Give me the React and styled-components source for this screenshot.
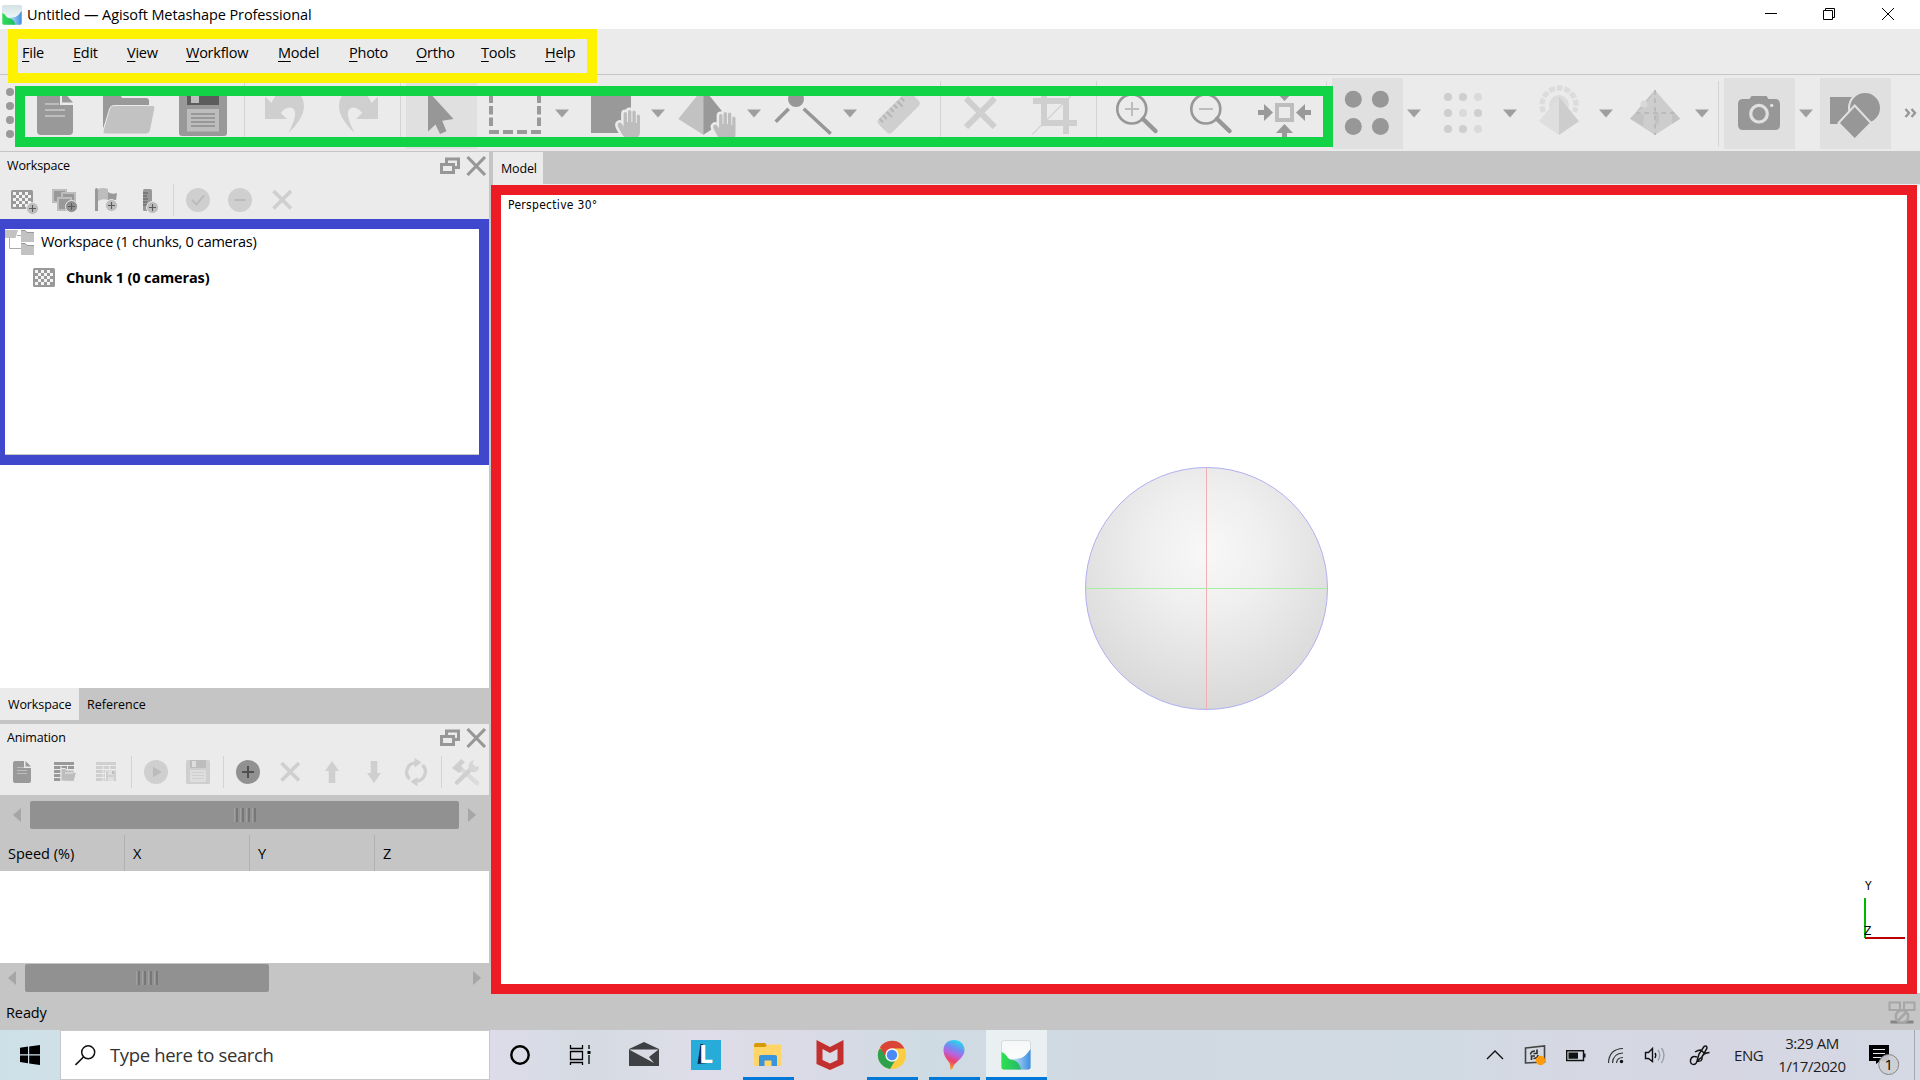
import React from "react";
import styled, { createGlobalStyle } from "styled-components";

const GlobalStyle = createGlobalStyle`
  * { box-sizing: border-box; }
  html, body { margin: 0; padding: 0; overflow: hidden; }
  body { font-family: "Open Sans", "Noto Sans", sans-serif; color: #000; }
  svg { display: block; flex: none; }
`;

const c = {
  panel: "#ebebeb",
  grey: "#c5c5c5",
  dark: "#999999",
  mid: "#bdbdbd",
  off: "#cfcfcf",
  ink: "#5c5c5c",
  pressed: "#e0e0e0",
};

const Desktop = styled.div`
  position: relative;
  width: 1920px;
  height: 1080px;
  display: flex;
  flex-direction: column;
  overflow: hidden;
  background: ${c.grey};
`;

const Label = styled.span`
  font-size: ${(p) => p.$size || 15}px;
  font-weight: ${(p) => (p.$bold ? 700 : 400)};
  letter-spacing: ${(p) => p.$track || 0}px;
  line-height: 20px;
  white-space: pre;
`;

/* ---------- title + menu ---------- */
const TitleBar = styled.header`
  display: flex;
  align-items: center;
  height: 29px;
  padding-left: 2px;
  background: #fff;
`;
const TitleText = styled(Label)`
  margin-left: 5px;
  flex: 1;
`;
const WindowButtons = styled.div`
  display: flex;
`;
const MenuBar = styled.nav`
  display: flex;
  gap: 28px;
  align-items: center;
  height: 46px;
  padding: 2px 0 0 22px;
  background: ${c.panel};
  border-bottom: 1px solid ${c.grey};
`;
const MenuItem = styled(Label)`
  display: block;
  width: ${(p) => p.$w}px;
  &::first-letter {
    text-decoration: underline;
    text-underline-offset: 3px;
  }
`;

/* ---------- main toolbar ---------- */
const ToolBar = styled.div`
  display: flex;
  align-items: flex-start;
  height: 77px;
  padding-top: 3px;
  background: ${c.panel};
  border-bottom: 1px solid ${c.grey};
`;
const ToolGroup = styled.div`
  display: flex;
  gap: 3px;
`;
const ToolButton = styled.div`
  display: flex;
  width: 71px;
  height: 71px;
  background: ${(p) => (p.$pressed ? c.pressed : "transparent")};
`;
const Tool = styled.div`
  display: flex;
  align-items: center;
`;
const Divider = styled.div`
  width: 11px;
  height: 71px;
  display: flex;
  padding: 3px 5px;
  &::before {
    content: "";
    width: 1px;
    background: #d4d4d4;
  }
`;

/* ---------- docks ---------- */
const Main = styled.div`
  display: flex;
  height: 842px;
`;
const Side = styled.aside`
  width: 489px;
  display: flex;
  flex-direction: column;
`;
const Splitter = styled.div`
  width: 4px;
  background: ${c.grey};
`;
const Dock = styled.section`
  height: ${(p) => p.$h}px;
  background: ${c.panel};
`;
const DockHeader = styled.div`
  display: flex;
  height: 32px;
  padding: 3px 2px 0 7px;
  & > span {
    flex: 1;
    padding-top: 1px;
  }
`;
const DockTools = styled.div`
  display: flex;
  height: 32px;
  padding-left: 1px;
`;
const DockDivider = styled.div`
  width: 8px;
  padding-left: 4px;
  display: flex;
  &::before {
    content: "";
    width: 1px;
    background: #d4d4d4;
  }
`;
const Tree = styled.div`
  height: 469px;
  padding-top: 10px;
  background: #fff;
`;
const TreeRow = styled.div`
  display: flex;
  align-items: center;
  height: ${(p) => p.$h}px;
  padding-left: ${(p) => p.$indent}px;
  gap: ${(p) => p.$gap}px;
  & > span { padding-top: ${(p) => p.$drop || 0}px; }
`;
const TabStrip = styled.div`
  display: flex;
  height: ${(p) => p.$h}px;
  background: ${c.grey};
`;
const Tab = styled.div`
  display: flex;
  align-items: center;
  height: 32px;
  padding: 2px 0 0 8px;
  width: ${(p) => p.$w}px;
  background: ${(p) => (p.$active ? c.panel : "transparent")};
`;
const ScrollBar = styled.div`
  display: flex;
  align-items: center;
  height: ${(p) => p.$h}px;
  padding: ${(p) => p.$pad};
  background: ${c.grey};
`;
const Thumb = styled.div`
  width: ${(p) => p.$w}px;
  height: 28px;
  margin: 0 auto 0 9px;
  display: flex;
  align-items: center;
  justify-content: center;
  border-radius: 2px;
  background: #919191;
`;
const TableHead = styled.div`
  display: flex;
  height: 36px;
  overflow: hidden;
  background: ${c.grey};
`;
const HeadCell = styled.div`
  flex: none;
  width: 125px;
  display: flex;
  align-items: center;
  padding: 2px 0 0 8px;
  border-right: 1px solid #b0b0b0;
`;
const TableBody = styled.div`
  height: 92px;
  background: #fff;
`;

/* ---------- viewport ---------- */
const Work = styled.main`
  flex: 1;
  display: flex;
  flex-direction: column;
`;
const Viewport = styled.div`
  position: relative;
  flex: 1;
  border-top: 1px solid ${c.panel};
  margin-bottom: 1px;
  background: #fff;
`;
const Placed = styled.div`
  position: absolute;
  left: ${(p) => p.$x}px;
  top: ${(p) => p.$y}px;
`;
const CanvasText = styled(Label)`
  font-family: "DejaVu Sans Condensed", "DejaVu Sans", sans-serif;
  font-stretch: condensed;
  line-height: 14px;
  display: block;
`;

/* ---------- status + taskbar ---------- */
const StatusBar = styled.footer`
  display: flex;
  align-items: center;
  justify-content: space-between;
  height: 36px;
  padding: 2px 4px 0 6px;
  background: ${c.grey};
`;
const TaskBar = styled.div`
  display: flex;
  height: 50px;
  background: linear-gradient(90deg, #cde0e7 0, #d0e0e8 60px, #dddcea 490px, #d5dbe2 590px, #dedde9 700px, #d9dae5 820px, #cfdbe2 920px, #d0d9e2 1100px, #d0dae2 1440px, #d5d8e3 1560px, #d6d6e3 1720px, #d4d9e4 1920px);
`;
const StartButton = styled.div`
  width: 60px;
  display: flex;
  align-items: center;
  justify-content: center;
`;
const SearchBox = styled.div`
  width: 430px;
  height: 50px;
  display: flex;
  align-items: center;
  padding-left: 14px;
  gap: 14px;
  background: #fff;
  border: 1px solid #c8c8c8;
  color: #333;
`;
const TaskButton = styled.div`
  position: relative;
  width: ${(p) => p.$w || 62}px;
  margin-left: ${(p) => p.$ml || 0}px;
  display: flex;
  flex-direction: column;
  align-items: center;
  justify-content: space-between;
  background: ${(p) => (p.$active ? "#eaeff2" : "transparent")};
`;
const Running = styled.div`
  width: ${(p) => (p.$active ? "100%" : "51px")};
  height: 3px;
  background: ${(p) => (p.$on ? "#0078d7" : "transparent")};
`;
const TileWrap = styled.div`
  position: relative;
`;
const TileLetter = styled.span`
  position: absolute;
  left: 8px;
  top: 10px;
  font: 700 25px/26px "Open Sans", sans-serif;
  color: #fff;
`;
const LogoWrap = styled.div`
  padding: 10px 1px 0 0;
`;
const Tray = styled.div`
  margin-left: auto;
  display: flex;
  align-items: center;
`;
const TrayText = styled(Label)`
  color: #1c1c1c;
`;
const Language = styled.div`
  width: 41px;
  padding-left: 14px;
`;
const Clock = styled.div`
  width: 92px;
  margin: 0 4px 2px 5px;
  display: flex;
  flex-direction: column;
  align-items: center;
  gap: 3px;
`;
const ShowDesktop = styled.div`
  width: 6px;
  height: 50px;
  margin-left: 8px;
  border-left: 1px solid #a3a8b3;
`;

const Highlight = styled.div`
  position: absolute;
  pointer-events: none;
  left: ${(p) => p.$x}px;
  top: ${(p) => p.$y}px;
  width: ${(p) => p.$w}px;
  height: ${(p) => p.$h}px;
  border: 10px solid ${(p) => p.$color};
  ${(p) => p.$edge && `border-left-width: 5px; box-shadow: inset 0 -1px 0 #c5c5c5;`}
`;

/* ---------- toolbar drawings ---------- */
const Icon = ({ children, w = 71, h = 71 }) => (
  <svg width={w} height={h} viewBox={`0 0 ${w} ${h}`} fill="none">{children}</svg>
);

const Hand = ({ dy = 0, dx = 0 }) => {
  const d = "M42 45.5Q43.6 43.6 45.6 45.6L47.6 48.5V35.8Q47.6 34 49.3 34T51 35.8V44H52V33.8Q52 32 53.7 32T55.4 33.8V44H56.4V34.4Q56.4 32.6 58.1 32.6T59.8 34.4V45H60.8V38.4Q60.8 36.6 62.4 36.6T64 38.4V54Q64 60 58 60H52.5Q48 60 46 56L42.4 49.5Q41 47 42 45.5Z";
  return (
    <g transform={`translate(${dx} ${dy})`}>
      <path d={d} stroke={c.panel} strokeWidth="5" strokeLinejoin="round" fill={c.panel} />
      <path d={d} fill={c.mid} />
    </g>
  );
};

const Arrow = () => (
  <svg width="22" height="14" viewBox="0 0 22 14"><path d="M4 2.5H18L11 10.5Z" fill="#9f9f9f" /></svg>
);

const bentArrow = "M15 18.5V41H37L30.8 35C34 30.5 39 28 43 30.5C48 34 43.5 45 38.5 54.8C46 48 54 38 54 28C54 18 47 11 38 11C31 11 25.500 16 21.500 25Z";

const NewIcon = () => (
  <Icon><path d="M21 12H40V27H53V53Q53 57 49 57H21Q17 57 17 53V16Q17 12 21 12Z" fill={c.dark} />
    <path d="M42 12V24.500H53Z" fill={c.dark} />
    <path d="M25 26H39M25 32H45M25 38H45" stroke={c.mid} strokeWidth="2" /></Icon>
);
const OpenIcon = () => (
  <Icon><path d="M9 51V15Q9 12 12 12H24L28 20H52Q55 20 55 23V28H20Q17 28 16 31Z" fill={c.dark} />
    <path d="M20 27.500H58Q61.500 27.500 60.700 31L56.500 52Q55.700 56 52 56H12Q8.300 56 9.200 52.500L15.500 31Q16.500 27.500 20 27.500Z" fill="#c2c2c2" stroke={c.panel} strokeWidth="1" /></Icon>
);
const SaveIcon = () => (
  <Icon><rect x="11" y="10" width="48" height="48" rx="3" fill={c.dark} /><path d="M19 10H51V27H19Z" fill={c.ink} />
    <path d="M23 12H31V25H23ZM19 31H51V53.500H19Z" fill={c.mid} />
    <path d="M23 36H47M23 40H47M23 44H47M23 48H47" stroke={c.dark} strokeWidth="1.8" /></Icon>
);
const UndoIcon = () => <Icon><path d={bentArrow} fill={c.off} /></Icon>;
const RedoIcon = () => <Icon><path transform="translate(69 0) scale(-1 1)" d={bentArrow} fill={c.off} /></Icon>;
const PointerIcon = () => <Icon><path d="M22 13V53.500L29.500 46.500L34 56L40.500 53.200L36.200 42.700L47.500 41Z" fill="#979797" /></Icon>;
const SelectIcon = () => (
  <Icon><g fill={c.dark}>{[9, 57].map((x) => <path key={x} d={`M${x} 16h4v9h-4zM${x} 28h4v8.500h-4zM${x} 39.500h4v8.500h-4z`} />)}
    {[9, 23, 37, 51].map((x) => <path key={x} d={`M${x} 52h10v4h-10zM${x} 12h10v4h-10z`} />)}</g></Icon>
);
const MoveRegionIcon = () => <Icon><path d="M15 15H55V55H15Z" fill={c.dark} /><Hand /></Icon>;
const MoveObjectIcon = () => (
  <Icon><path d="M31.300 10L6.300 41L31.300 56.700Z" fill="#c2c2c2" /><path d="M31.300 10L56.300 41L31.300 56.700Z" fill={c.dark} /><Hand dy={2} dx={-0.500} /></Icon>
);
const PointIcon = () => (
  <Icon><circle cx="28" cy="21" r="8" fill="#979797" /><path d="M20.700 30.700L7.700 43.700M35.700 30.700L62.700 55.700" stroke="#979797" strokeWidth="3.600" /></Icon>
);
const RulerIcon = () => (
  <Icon><g transform="translate(34.700 34.500) rotate(-45)"><rect x="-22.500" y="-9.500" width="45" height="19" rx="4" fill={c.off} />
    <path d="M-18 -9V-4M-13 -9V-4M-8 -9V-1.500M-3 -9V-4M2 -9V-4M7 -9V-1.500M12 -9V-4" stroke="#b5b5b5" strokeWidth="2" /></g></Icon>
);
const DeleteIcon = () => <Icon><path d="M20 20.300L48.700 49M48.700 20.300L20 49" stroke={c.off} strokeWidth="6" /></Icon>;
const CropIcon = () => (
  <Icon><path d="M13 23H46V56M24 14V45H57" stroke={c.off} strokeWidth="6" /><path d="M12.300 56.300L51 17.700" stroke={c.off} strokeWidth="1.200" /></Icon>
);
const ZoomIcon = ({ plus }) => (
  <Icon><circle cx="29.800" cy="31" r="14.500" stroke="#979797" strokeWidth="2.600" /><path d={plus ? "M23 31H37M30 24V38" : "M23 31H37"} stroke={c.mid} strokeWidth="2" />
    <path d="M41 41L53.500 53" stroke="#979797" strokeWidth="4.500" strokeLinecap="round" /></Icon>
);
const ZoomInIcon = () => <ZoomIcon plus />;
const FitIcon = () => (
  <Icon><rect x="27" y="27" width="15" height="15" stroke={c.mid} strokeWidth="4" />
    {[0, 90, 180, 270].map((r) => <path key={r} transform={`rotate(${r} 34.500 34.500)`} d="M8 32H14V26L23 34.500L14 43V37H8Z" fill={c.dark} />)}</Icon>
);
const FourDots = () => <Icon>{[21.300, 48.400].map((x) => [21.300, 48.500].map((y) => <circle key={`${x}-${y}`} cx={x} cy={y} r="8.500" fill="#979797" />))}</Icon>;
const NineDots = () => (
  <Icon>{[[0, 0, 1], [0, 1, 0], [0, 0, 1]].map((row, j) => row.map((l, i) => <circle key={`${i}${j}`} cx={20 + i * 15} cy={19 + j * 16} r="4" fill={l ? "#dadada" : "#cecece"} />))}</Icon>
);
const CloudIcon = () => (
  <Icon><path d="M19.500 34A17 17 0 1 1 50.500 34" stroke="#dcdcdc" strokeWidth="5.200" strokeDasharray="6 1.800" />
    <circle cx="35" cy="27" r="10" fill="#dcdcdc" /><path d="M35 19L15 43.300L35 57Z" fill="#dedede" /><path d="M35 19L55 43.300L35 57Z" fill="#cdcdcd" /></Icon>
);
const TexturedIcon = () => (
  <Icon><path d="M35 12.300L10 40.700L35 57L60 40.700Z" fill="#cdcdcd" /><path d="M35 12L16 34Q25 30 27 25ZM10 40.700L17 34L24 37L23 48ZM52 32L60 40.700L52 46ZM35 35H39V45L35 48Z" fill="#c3c3c3" />
    <circle cx="24" cy="26" r="3.500" fill="#d8d8d8" /><path d="M35 12V57M16 35H54" stroke="#bababa" strokeWidth="2" strokeDasharray="4.500 4" /></Icon>
);
const CameraIcon = () => (
  <Icon><path d="M19 21H25.500L27.500 18H42.500L44.500 21H51Q56 21 56 26V47Q56 52 51 52H19Q14 52 14 47V26Q14 21 19 21Z" fill="#979797" />
    <circle cx="35" cy="35.700" r="8.300" stroke={c.pressed} strokeWidth="3.200" /><circle cx="47.700" cy="27.400" r="1.700" fill={c.pressed} /></Icon>
);
const ShapesIcon = () => (
  <Icon><path d="M10 19H34V46H10Z" fill="#979797" /><circle cx="45" cy="30" r="16" fill="#979797" stroke={c.pressed} strokeWidth="2" />
    <path d="M34.700 27.500L51 45L34.700 61.500L18.500 45Z" fill="#979797" stroke={c.pressed} strokeWidth="2" /></Icon>
);

const GROUPS = [
  [[NewIcon], [OpenIcon], [SaveIcon]],
  [[UndoIcon], [RedoIcon]],
  [[PointerIcon, "on"], [SelectIcon, "", "menu"], [MoveRegionIcon, "", "menu"], [MoveObjectIcon, "", "menu"], [PointIcon, "", "menu"], [RulerIcon]],
  [[DeleteIcon], [CropIcon]],
  [[ZoomInIcon], [ZoomIcon], [FitIcon]],
  [[FourDots, "on", "menu"], [NineDots, "", "menu"], [CloudIcon, "", "menu"], [TexturedIcon, "", "menu"]],
  [[CameraIcon, "on", "menu"], [ShapesIcon, "on"]],
];

/* ---------- dock drawings ---------- */
const S = ({ children }) => <Icon w={42} h={32}>{children}</Icon>;
const Plus = ({ x, y, fill = c.mid }) => (
  <g><circle cx={x} cy={y} r="6" fill={fill} stroke={c.panel} strokeWidth="1" /><path d={`M${x - 3.500} ${y}h7M${x} ${y - 3.500}v7`} stroke={c.ink} strokeWidth="1.100" /></g>
);
const Checker = ({ x, y }) => {
  const cells = [];
  for (let j = 0; j < 5; j++) for (let i = 0; i < 6; i++) if ((i + j) % 2 === 0) cells.push(`M${x + 2 + i * 3} ${y + 2 + j * 3}h3v3h-3z`);
  return <g><rect x={x} y={y} width="22" height="19" rx="1.500" fill={c.dark} /><path d={cells.join("")} fill="#f4f4f4" /></g>;
};
const ChunkAdd = () => <S><Checker x={10} y={6} /><Plus x={31.500} y={24.500} /></S>;
const PhotosAdd = () => (
  <S>{[[10, 6], [19, 9], [15, 14]].map(([x, y]) => <rect key={x} x={x} y={y} width="13" height="12" fill={c.dark} stroke={c.mid} strokeWidth="2" />)}<Plus x={28.500} y={22.500} fill="#8f8f8f" /></S>
);
const FlagAdd = () => (
  <S><path d="M10 6Q10 4 11.500 4T13 6V27H10Z" fill={c.dark} /><path d="M23 8Q27 11 32 9L31 16H23Z" fill={c.dark} /><path d="M13 5Q18 3 23 5V16Q18 14 13 17Z" fill={c.mid} /><Plus x={26.500} y={21.500} /></S>
);
const ScaleAdd = () => (
  <S><rect x="16" y="5" width="9" height="22" rx="1.500" fill={c.dark} /><path d="M16 9h5M16 12h4M16 15h5M16 18h4M16 21h5" stroke={c.ink} strokeWidth="1" /><Plus x={25.500} y={23.500} /></S>
);
const Disc = ({ d, fill = c.off, stroke = "#bcbcbc", solid }) => (
  <S><circle cx="21" cy="16" r="12" fill={fill} /><path d={d} stroke={solid ? "none" : stroke} fill={solid ? stroke : "none"} strokeWidth="2" /></S>
);
const SmallX = () => <S><path d="M12.500 7L30 24.500M30 7L12.500 24.500" stroke={c.off} strokeWidth="3.700" /></S>;
const DocSmall = () => (
  <S><path d="M14 5H23V12H30V25Q30 27 28 27H14Q12 27 12 25V7Q12 5 14 5Z" fill={c.dark} /><path d="M24.500 5V10.500H30Z" fill={c.dark} /><path d="M16 11.500h7M16 14.500h10M16 17.500h10" stroke={c.mid} strokeWidth="1" /></S>
);
const Grid = ({ color }) => <g><path d="M11 6H31V25H11Z" fill={color} /><path d="M11 9.500H31M11 13.500H31M11 17.500H31M11 21.500H31M18 9.500V25M24.500 9.500V25" stroke={c.panel} strokeWidth="1" /></g>;
const GridOpen = () => <S><Grid color={c.dark} /><path d="M18 25V12.500H22L24 14H31V16.500H33.500L31 25.500Z" fill={c.mid} stroke={c.panel} /><path d="M22 17H30" stroke={c.panel} /></S>;
const GridSave = () => <S><Grid color={c.off} /><rect x="20.500" y="14" width="11" height="11.500" rx="1" fill={c.off} stroke={c.panel} /><path d="M23 15h6v4h-6zM23 21h6v4h-6z" fill="#dfdfdf" /><path d="M27 15h2v3h-2z" fill={c.mid} /></S>;
const SaveSmall = () => (
  <S><rect x="9" y="4" width="24" height="24" rx="1.500" fill={c.off} /><path d="M13 4H29V12H13Z" fill={c.mid} /><path d="M15 5H19V11H15ZM13 14H29V26H13Z" fill="#dedede" /><path d="M15 16.500H27M15 19.500H27M15 22.500H27" stroke={c.off} /></S>
);
const Up = ({ flip }) => <S><path transform={flip ? "rotate(180 21 16)" : undefined} d="M21 5L28 15H24.300V27H17.700V15H14Z" fill={c.off} /></S>;
const Refresh = () => (
  <S><path d="M20 6.800A9.500 9.500 0 0 0 14.500 23M22 25.200A9.500 9.500 0 0 0 27.500 9" stroke={c.off} strokeWidth="3.300" /><path d="M19.500 2V11.500L26.500 6.500ZM22.500 30.500V21L15.500 25.500Z" fill={c.off} /></S>
);
const ToolsIcon = () => (
  <S><path d="M15 12L32 27" stroke="#dcdcdc" strokeWidth="4.500" strokeLinecap="round" /><path d="M28 11L12 26.500" stroke={c.off} strokeWidth="4.500" strokeLinecap="round" />
    <path d="M7 12L16 3L20 6L16 10L18 13L14 17Z" fill={c.off} /><path d="M24 13Q22 6 29 4L27.500 8L30 11L34 10Q34 17 27 16Z" fill="#d6d6d6" /></S>
);

const FloatClose = () => (
  <Icon w={48} h={22}><path d="M7.500 8V4H19.500V12.500H16" stroke="#979797" strokeWidth="3" /><path d="M2.500 9.500H14.500V17.500H2.500Z" stroke="#979797" strokeWidth="3" />
    <path d="M28.500 2L46 20M46 2L28.500 20" stroke="#979797" strokeWidth="3.200" /></Icon>
);

const Grip = () => (
  <svg width="22" height="14" viewBox="0 0 22 14">{[2, 8, 14, 20].map((x) => <path key={x} d={`M${x} 0h2v14h-2z`} fill="#777" />)}{[0, 6, 12, 18].map((x) => <path key={x} d={`M${x} 0h1v14h-1z`} fill="#a0a0a0" />)}</svg>
);
const ScrollArrow = ({ right }) => <svg width="8" height="14" viewBox="0 0 8 14"><path d={right ? "M0 0L8 7L0 14Z" : "M8 0L0 7L8 14Z"} fill="#a6a6a6" /></svg>;

const RootIcon = () => (
  <Icon w={29} h={26}><path d="M4.500 8V19.500H16M12 6.500H16" stroke="#ababab" /><path d="M0 1H13L10.500 9H0Z" fill="#c2c2c2" /><path d="M16 1H20L22 3H29V13H16ZM16 14H20L22 16H29V26H16Z" fill="#c2c2c2" /><path d="M16 1.500H20L22 3.500H29M16 14.500H20L22 16.500H29" stroke="#999" /></Icon>
);

const MetaLogo = ({ size }) => (
  <svg width={size} height={size} viewBox="0 0 30 30">
    <defs>
      <linearGradient id={`g${size}`} x1="0" x2="1"><stop offset="0" stopColor="#2de04f" /><stop offset="1" stopColor="#24b96e" /></linearGradient>
      <linearGradient id={`b${size}`} x1="0" x2="1"><stop offset="0" stopColor="#d8ecfa" /><stop offset="1" stopColor="#3c8fe0" /></linearGradient>
      <linearGradient id={`w${size}`} x1="0" x2="0" y1="0" y2="1"><stop offset="0" stopColor={size < 25 ? "#d3e3e6" : "#f6f7f8"} /><stop offset="1" stopColor="#fff" /></linearGradient>
    </defs>
    <rect x=".5" y=".5" width="29" height="29" rx="2.500" fill={`url(#w${size})`} stroke="#d5dcdc" />
    <path d="M9 19Q15 19 20 18Q25 16 29.500 9V27Q29.500 29.500 27 29.500H15Z" fill={`url(#b${size})`} />
    <path d="M.5 12Q4 13 7 18Q9 20 12 20Q18 21 20 29.500H3Q.5 29.500 .5 27Z" fill={`url(#g${size})`} />
  </svg>
);

/* ---------- taskbar drawings ---------- */
const T = ({ children }) => <svg width="30" height="40" viewBox="0 0 30 40" fill="none">{children}</svg>;
const Cortana = () => <T><circle cx="15" cy="25" r="8.700" stroke="#000" strokeWidth="2.400" /></T>;
const TaskView = () => (
  <T><path d="M5.500 15V18.500H17.500V15M5.500 21.500H17.500V29.500H5.500ZM5.500 35V32.500H17.500V35M24 15V19M24 25V34" stroke="#000" strokeWidth="1.300" /><path d="M22.500 21h3v3h-3z" fill="#000" /></T>
);
const Mail = () => (
  <T><path d="M0 19L15 12L30 19V36H0Z" fill="#3f4044" /><path d="M0 19.500H29.500L20 27L25 33L12 26Z" fill="#d9d9e4" /></T>
);
const LTile = () => (
  <T><path d="M0 10H30V40H0Z" fill="#27abd9" /><path d="M9.500 14L6.500 34L22 32.500L12 30V14Z" fill="#0b2950" /></T>
);
const Folder = () => (
  <T><path d="M1 15Q1 13 3 13H12L14 15.500V18H1Z" fill="#d69a06" /><path d="M1 17H12L15 14.500H28V35Q28 36 27 36H2Q1 36 1 35Z" fill="#ffd567" /><path d="M6 36V27Q6 25 8 25H22Q24 25 24 27V36H18.500V30.500H11.500V36Z" fill="#3a94dc" /></T>
);
const McAfee = () => (
  <T><path d="M1.500 10L15 17L28.500 10V34L15 40L1.500 34Z" fill="#c22f2e" /><path d="M7.500 19L15 23L22.500 19V30L15 33.500L7.500 30Z" fill="#dadbe5" /></T>
);
const Chrome = () => (
  <T><circle cx="15" cy="25" r="14" fill="#fccd41" /><path d="M15 25L2.500 18.500A14 14 0 0 0 13 39L19 29Z" fill="#2da14c" /><path d="M15 18.500H27.500A14 14 0 0 0 3 17.500L9.500 28Z" fill="#db4437" />
    <circle cx="15" cy="25" r="6.700" fill="#f4f6f9" /><circle cx="15" cy="25" r="5.200" fill="#4a8af4" /></T>
);
const Paint = () => (
  <T><defs><linearGradient id="pt" x1=".7" y1="0" x2=".4" y2="1"><stop offset="0" stopColor="#22e0ee" /><stop offset=".3" stopColor="#6f8df2" /><stop offset=".5" stopColor="#b863de" /><stop offset=".72" stopColor="#f0406c" /><stop offset="1" stopColor="#f6a521" /></linearGradient></defs>
    <path d="M15 10C21 10 25.500 14 25.500 20C25.500 27 18 31 15 35C14 37 14 39 11 40C12 38 11 36 10.500 33C8 29 4.500 26 4.500 20C4.500 14 9 10 15 10Z" fill="url(#pt)" /></T>
);

const TASKS = [
  { art: <Cortana />, w: 60 },
  { art: <TaskView />, w: 60 },
  { art: <Mail />, ml: 3 },
  { art: <TileWrap><LTile /><TileLetter>L</TileLetter></TileWrap> },
  { art: <Folder />, on: true },
  { art: <McAfee /> },
  { art: <Chrome />, on: true },
  { art: <Paint />, on: true },
  { art: <LogoWrap><MetaLogo size={30} /></LogoWrap>, on: true, active: true, w: 61, ml: 1 },
];

const TrayIcons = () => (
  <svg width="240" height="50" viewBox="1480 1030 240 50" fill="none" stroke="#111" strokeWidth="1.400">
    <path d="M1487 1059L1495 1051L1503 1059" />
    <path d="M1525.500 1048L1544.500 1046V1062L1525.500 1063Z" stroke="#444" strokeWidth="1.600" />
    <path d="M1530.500 1054.500Q1531 1051 1535 1051M1533.500 1053.500H1537V1049.500M1538 1055Q1537.500 1058.500 1533.500 1058.500M1535 1056H1531.500V1060" stroke="#333" strokeWidth="1.700" />
    <circle cx="1540.500" cy="1060.500" r="4.700" fill="#ff9a0c" stroke="none" />
    <path d="M1566.700 1050.700H1583.500V1060.500H1566.700Z" /><path d="M1568.500 1052.500H1578V1058.800H1568.500ZM1583.500 1053.500H1585.500V1057.500H1583.500Z" fill="#111" stroke="none" />
    <path d="M1608.500 1063Q1609 1049 1623 1048.500M1612.500 1063Q1613 1053.500 1623 1053M1616.500 1063Q1617 1057.500 1623 1057.500" stroke="#333" strokeWidth="1.200" /><circle cx="1621.500" cy="1061.500" r="1.700" fill="#111" stroke="none" />
    <path d="M1645.500 1052.500H1648.500L1652.500 1048.500V1061.500L1648.500 1058.500H1645.500Z" /><path d="M1655 1053Q1656.500 1055 1655 1058" /><path d="M1658 1050Q1661.500 1055 1658 1060.500M1661.500 1048Q1666.500 1055 1661.500 1063" stroke="#999fa8" />
    <path d="M1697 1057Q1692 1055 1690.500 1060Q1690 1064.500 1694 1064.500Q1696.500 1064 1697 1061Q1703 1062 1702 1057Q1703 1053 1709.500 1052.500M1697 1061L1699 1054L1704 1046.500Q1707 1045 1707 1048L1702 1057L1697 1061M1701 1050L1704 1053M1695 1052Q1698 1050 1701 1050" strokeWidth="1.500" />
  </svg>
);

const Notify = () => (
  <svg width="44" height="50" viewBox="1862 1030 44 50" fill="none">
    <path d="M1869 1045H1889V1061H1880L1876 1064V1061H1869Z" fill="#000" /><path d="M1873 1049.500H1885M1873 1053.500H1885M1873 1057.500H1881" stroke="#e8e8ee" strokeWidth="1.200" />
    <circle cx="1888.700" cy="1064.500" r="10" fill="#cfcfd3" fillOpacity=".93" stroke="#85858a" />
    <text x="1888.700" y="1070" textAnchor="middle" fontFamily="Open Sans" fontSize="15" fill="#000">1</text>
  </svg>
);

const MENU = [["File", 23], ["Edit", 26], ["View", 31], ["Workflow", 64], ["Model", 43], ["Photo", 39], ["Ortho", 37], ["Tools", 36], ["Help", 33]];

export default function App() {
  return (
    <Desktop>
      <GlobalStyle />
      <TitleBar>
        <MetaLogo size={20} />
        <TitleText $size={14.5} $track={-0.1}>Untitled — Agisoft Metashape Professional</TitleText>
        <WindowButtons>
          <svg width="160" height="29" viewBox="1760 0 160 29" fill="none" stroke="#000" strokeWidth="1">
            <path d="M1765 13.500H1777M1823.500 10.500H1832.500V19.500H1823.500ZM1825.500 10V8.500H1834.500V17.500H1833M1882 8L1894 20M1894 8L1882 20" />
          </svg>
        </WindowButtons>
      </TitleBar>
      <MenuBar>
        {MENU.map(([m, w]) => <MenuItem key={m} $w={w} $size={14.5} $track={-0.25}>{m}</MenuItem>)}
      </MenuBar>
      <ToolBar>
        <svg width="20" height="71" viewBox="0 0 20 71">{[14, 28, 42, 56].map((y) => <circle key={y} cx="10" cy={y} r="4" fill={c.dark} />)}</svg>
        {GROUPS.map((g, i) => (
          <React.Fragment key={i}>
            {i > 0 && <Divider />}
            <ToolGroup>
              {g.map(([Art, on, menu], k) => (
                <Tool key={k}><ToolButton $pressed={!!on}><Art /></ToolButton>{menu && <Arrow />}</Tool>
              ))}
            </ToolGroup>
          </React.Fragment>
        ))}
        <svg width="29" height="71" viewBox="1891 78 29 71" fill="none"><path d="M1905.500 109L1909 113L1905.500 117M1911.500 109L1915 113L1911.500 117" stroke="#979797" strokeWidth="2.400" /></svg>
      </ToolBar>

      <Main>
        <Side>
          <Dock $h={67}>
            <DockHeader><Label $size={12.5} $track={-0.15}>Workspace</Label><FloatClose /></DockHeader>
            <DockTools>
              <ChunkAdd /><PhotosAdd /><FlagAdd /><ScaleAdd /><DockDivider />
              <Disc d="M15 16L19.500 20.500L27 11.500" /><Disc d="M15 16H27" /><SmallX />
            </DockTools>
          </Dock>
          <Tree>
            <TreeRow $h={26} $indent={5} $gap={7}><RootIcon /><Label $size={14.5} $track={-0.28}>Workspace (1 chunks, 0 cameras)</Label></TreeRow>
            <TreeRow $h={44} $indent={33} $gap={11} $drop={2}><Icon w={22} h={19}><Checker x={0} y={0} /></Icon><Label $bold $size={14.5} $track={-0.14}>Chunk 1 (0 cameras)</Label></TreeRow>
          </Tree>
          <TabStrip $h={36}>
            <Tab $active $w={79}><Label $size={12.5} $track={-0.1}>Workspace</Label></Tab>
            <Tab $w={80}><Label $size={12.5}>Reference</Label></Tab>
          </TabStrip>
          <Dock $h={71}>
            <DockHeader><Label $size={12.5} $track={-0.15}>Animation</Label><FloatClose /></DockHeader>
            <DockTools>
              <DocSmall /><GridOpen /><GridSave /><DockDivider />
              <Disc d="M18 10.500L27 16L18 21.500Z" solid /><SaveSmall /><DockDivider />
              <Disc d="M15 16H27M21 10V22" fill="#919191" stroke="#4f4f4f" /><SmallX /><Up /><Up flip /><Refresh /><DockDivider />
              <ToolsIcon />
            </DockTools>
          </Dock>
          <ScrollBar $h={40} $pad="0 13px">
            <ScrollArrow /><Thumb $w={429}><Grip /></Thumb><ScrollArrow right />
          </ScrollBar>
          <TableHead>
            {["Speed (%)", "X", "Y", "Z"].map((h) => <HeadCell key={h}><Label $size={14.5} $track={0}>{h}</Label></HeadCell>)}
          </TableHead>
          <TableBody />
          <ScrollBar $h={30} $pad="0 8px">
            <ScrollArrow /><Thumb $w={244}><Grip /></Thumb><ScrollArrow right />
          </ScrollBar>
        </Side>
        <Splitter />
        <Work>
          <TabStrip $h={32}><Tab $active $w={50}><Label $size={12.5} $track={-0.15}>Model</Label></Tab></TabStrip>
          <Viewport>
            <Placed $x={15} $y={13}><CanvasText $size={12} $track={0.3}>Perspective 30°</CanvasText></Placed>
            <Placed $x={590} $y={280}>
              <svg width="246" height="246" viewBox="-123 -123 246 246" fill="none">
                <defs><radialGradient id="ball" cx=".5" cy=".34" r=".72"><stop offset="0" stopColor="#f8f8f8" /><stop offset=".35" stopColor="#efefef" /><stop offset=".7" stopColor="#e1e1e1" /><stop offset="1" stopColor="#d5d5d5" /></radialGradient></defs>
                <circle r="121" cx=".5" cy=".5" fill="url(#ball)" stroke="#b0b0f2" />
                <path d="M.5 -120V121" stroke="#f0b0b0" /><path d="M-120 .5H121" stroke="#a5f0a5" />
              </svg>
            </Placed>
            <Placed $x={1371} $y={712}>
              <svg width="42" height="42" viewBox="0 0 42 42"><path d="M0 1H2V41H0Z" fill="#00b800" /><path d="M1 40H41V42H1Z" fill="#b80000" /></svg>
            </Placed>
            <Placed $x={1372} $y={694}><CanvasText $size={12}>Y</CanvasText></Placed>
            <Placed $x={1371} $y={739}><CanvasText $size={12}>Z</CanvasText></Placed>
          </Viewport>
        </Work>
      </Main>

      <StatusBar>
        <Label $size={14.5} $track={-0.1}>Ready</Label>
        <svg width="28" height="24" viewBox="0 0 28 24" fill="none"><path d="M1.500 1.500H12V9H1.500ZM16 1.500H26.500V9H16Z" stroke="#a6a6a6" strokeWidth="2" /><path d="M2.500 19.500H25.500V22.500H2.500Z" fill="#858585" /><circle cx="14" cy="15.500" r="6.300" fill={c.grey} stroke="#a6a6a6" strokeWidth="2.500" /><path d="M10 19.500L18 11.500" stroke="#a6a6a6" strokeWidth="2.500" /></svg>
      </StatusBar>

      <TaskBar>
        <StartButton><svg width="20" height="20" viewBox="0 0 20 20"><path d="M0 2.800L8 1.600V9.300H0ZM9.200 1.400L20 0V9.300H9.200ZM0 10.500H8V18.300L0 17.100ZM9.200 10.500H20V20L9.200 18.500Z" fill="#000" /></svg></StartButton>
        <SearchBox>
          <svg width="21" height="21" viewBox="0 0 21 21" fill="none"><circle cx="13.200" cy="7.300" r="6.500" stroke="#111" strokeWidth="1.500" /><path d="M8.500 12L.5 20" stroke="#111" strokeWidth="1.600" /></svg>
          <Label $size={18.5} $track={-0.35}>Type here to search</Label>
        </SearchBox>
        {TASKS.map((t, i) => (
          <TaskButton key={i} $w={t.w} $ml={t.ml} $active={t.active}>{t.art}<Running $on={t.on} $active={t.active} /></TaskButton>
        ))}
        <Tray>
          <TrayIcons />
          <Language><TrayText $size={15} $track={-0.4}>ENG</TrayText></Language>
          <Clock><TrayText $size={15} $track={-0.4}>3:29 AM</TrayText><TrayText $size={15} $track={-0.4}>1/17/2020</TrayText></Clock>
          <Notify />
          <ShowDesktop />
        </Tray>
      </TaskBar>

      <Highlight $x={8} $y={29} $w={589} $h={54} $color="#fff200" />
      <Highlight $x={15} $y={86} $w={1318} $h={61} $color="#12d345" />
      <Highlight $x={0} $y={219} $w={489} $h={246} $color="#3f48cc" $edge />
      <Highlight $x={491} $y={185} $w={1426} $h={809} $color="#ed1c24" />
    </Desktop>
  );
}
